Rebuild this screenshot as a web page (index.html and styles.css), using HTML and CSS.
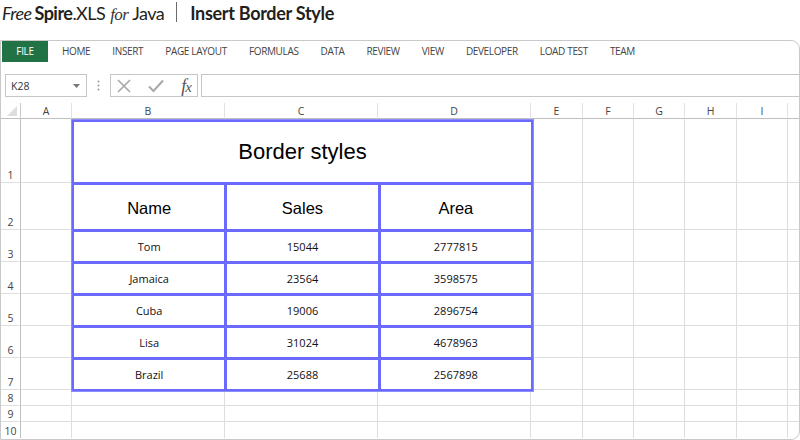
FILE: index.html
```html
<!DOCTYPE html>
<html>
<head>
<meta charset="utf-8">
<link rel="stylesheet" href="styles.css">
</head>
<body>
<header class="title">
  <div class="logo"><span class="l-free">Free</span><span class="l-spire">Spire</span><span class="l-xls">.XLS</span><span class="l-for">for</span><span class="l-java">Java</span></div>
  <span class="sep"></span>
  <h1 class="page-title">Insert Border Style</h1>
</header>
<div class="frame">
  <nav class="tabs">
    <span class="tab file">FILE</span>
    <span class="tab">HOME</span>
    <span class="tab">INSERT</span>
    <span class="tab">PAGE LAYOUT</span>
    <span class="tab">FORMULAS</span>
    <span class="tab">DATA</span>
    <span class="tab">REVIEW</span>
    <span class="tab">VIEW</span>
    <span class="tab">DEVELOPER</span>
    <span class="tab">LOAD TEST</span>
    <span class="tab">TEAM</span>
  </nav>
  <div class="fbar">
    <div class="namebox"><span>K28</span><svg class="dd" width="7" height="4" viewBox="0 0 7 4"><path d="M0 0H7L3.5 4Z" fill="#777"/></svg></div>
    <svg class="dots" width="3" height="11" viewBox="0 0 3 11"><circle cx="1.5" cy="1.5" r="1" fill="#9a9a9a"/><circle cx="1.5" cy="5.5" r="1" fill="#9a9a9a"/><circle cx="1.5" cy="9.5" r="1" fill="#9a9a9a"/></svg>
    <div class="fbtns">
      <svg width="14" height="14" viewBox="0 0 14 14"><path d="M1 1L13 13M13 1L1 13" stroke="#a8a8a8" stroke-width="1.6" fill="none"/></svg>
      <svg width="16" height="14" viewBox="0 0 16 14"><path d="M1 7.5L5.5 12L15 1.5" stroke="#a8a8a8" stroke-width="2" fill="none"/></svg>
      <span class="fx">f<i>x</i></span>
    </div>
    <div class="finput"></div>
  </div>
  <div class="sheet">
    <div class="tbl">
      <div class="t t-title">Border styles</div>
      <div class="t t-head">Name</div>
      <div class="t t-head">Sales</div>
      <div class="t t-head">Area</div>
      <div class="t">Tom</div><div class="t">15044</div><div class="t">2777815</div>
      <div class="t">Jamaica</div><div class="t">23564</div><div class="t">3598575</div>
      <div class="t">Cuba</div><div class="t">19006</div><div class="t">2896754</div>
      <div class="t">Lisa</div><div class="t">31024</div><div class="t">4678963</div>
      <div class="t">Brazil</div><div class="t">25688</div><div class="t">2567898</div>
    </div>

    <div class="corner"><span class="tri"></span></div>
    <div class="ch">A</div><div class="ch">B</div><div class="ch">C</div><div class="ch">D</div><div class="ch">E</div><div class="ch">F</div><div class="ch">G</div><div class="ch">H</div><div class="ch">I</div><div class="ch last"></div>

    <div class="rh">1</div><div class="c"></div><div class="c"></div><div class="c"></div><div class="c"></div><div class="c"></div><div class="c"></div><div class="c last"></div>
    <div class="rh">2</div><div class="c"></div><div class="c"></div><div class="c"></div><div class="c"></div><div class="c"></div><div class="c"></div><div class="c last"></div>
    <div class="rh">3</div><div class="c"></div><div class="c"></div><div class="c"></div><div class="c"></div><div class="c"></div><div class="c"></div><div class="c last"></div>
    <div class="rh">4</div><div class="c"></div><div class="c"></div><div class="c"></div><div class="c"></div><div class="c"></div><div class="c"></div><div class="c last"></div>
    <div class="rh">5</div><div class="c"></div><div class="c"></div><div class="c"></div><div class="c"></div><div class="c"></div><div class="c"></div><div class="c last"></div>
    <div class="rh">6</div><div class="c"></div><div class="c"></div><div class="c"></div><div class="c"></div><div class="c"></div><div class="c"></div><div class="c last"></div>
    <div class="rh">7</div><div class="c"></div><div class="c"></div><div class="c"></div><div class="c"></div><div class="c"></div><div class="c"></div><div class="c last"></div>
    <div class="rh">8</div><div class="c"></div><div class="c"></div><div class="c"></div><div class="c"></div><div class="c"></div><div class="c"></div><div class="c"></div><div class="c"></div><div class="c"></div><div class="c last"></div>
    <div class="rh">9</div><div class="c"></div><div class="c"></div><div class="c"></div><div class="c"></div><div class="c"></div><div class="c"></div><div class="c"></div><div class="c"></div><div class="c"></div><div class="c last"></div>
    <div class="rh rlast">10</div><div class="c"></div><div class="c"></div><div class="c"></div><div class="c"></div><div class="c"></div><div class="c"></div><div class="c"></div><div class="c"></div><div class="c"></div><div class="c last"></div>
  </div>
</div>
</body>
</html>
```
FILE: styles.css
```css
* { box-sizing: border-box; }
html, body { margin: 0; padding: 0; }
body {
  width: 800px;
  height: 440px;
  overflow: hidden;
  background: #fff;
  font-family: "Open Sans", "Noto Sans", sans-serif;
  color: #222;
}

/* ---------- title ---------- */
.title {
  height: 40px;
  display: flex;
  align-items: flex-start;
  padding: 1px 0 0 2px;
}
.logo {
  display: flex;
  align-items: baseline;
  font-family: Lato, sans-serif;
  font-size: 18px;
  line-height: 24px;
  color: #231f20;
  letter-spacing: -0.55px;
}
.l-free { font-style: italic; margin-right: 3px; }
.l-spire { font-weight: 700; }
.l-for {
  font-family: "Liberation Serif", serif;
  font-style: italic;
  font-size: 17px;
  color: #333;
  margin: 0 4px 0 5px;
}
.sep {
  width: 1px;
  height: 20px;
  background: #6b6b6b;
  margin: 1px 13px 0 12px;
}
.page-title {
  margin: 0;
  font-family: Lato, sans-serif;
  font-weight: 700;
  font-size: 18px;
  line-height: 24px;
  letter-spacing: -0.3px;
  color: #231f20;
}

/* ---------- frame ---------- */
.frame {
  height: 400px;
  border: 1px solid #c9c9c9;
  border-radius: 0 9px 9px 0;
  overflow: hidden;
}

.tabs {
  display: flex;
  align-items: center;
  height: 21px;
  padding-left: 1px;
}
.tab {
  font-family: "Open Sans", sans-serif;
  font-size: 10px;
  letter-spacing: -0.35px;
  color: #444;
  padding: 0 11px;
  line-height: 21px;
}
.tab.file {
  background: #217346;
  color: #fff;
  width: 46px;
  text-align: center;
  padding: 0;
  margin-right: 3px;
}

/* ---------- formula bar ---------- */
.fbar {
  display: flex;
  align-items: center;
  height: 23px;
  margin-top: 12px;
  padding-left: 4px;
}
.namebox {
  width: 82px;
  height: 23px;
  border: 1px solid #c6c6c6;
  display: flex;
  align-items: center;
  justify-content: space-between;
  padding: 0 6px 0 5px;
  font-size: 10.5px;
  color: #333;
}
.dots { margin: 0 10px 0 10px; }
.fbtns {
  width: 88px;
  height: 23px;
  border: 1px solid #c6c6c6;
  display: flex;
  align-items: center;
  justify-content: space-between;
  padding: 0 6px 0 6px;
}
.fx {
  font-family: "Liberation Serif", serif;
  font-style: italic;
  font-size: 18px;
  color: #555;
  letter-spacing: -1px;
  line-height: 1;
}
.fx i { font-size: 15px; }
.finput {
  flex: 1;
  height: 23px;
  border: 1px solid #c6c6c6;
  border-right: none;
  margin-left: 3px;
}

/* ---------- sheet ---------- */
.sheet {
  margin-top: 6px;
  display: grid;
  grid-template-columns: 20px 51px 153px 153px 153px 52px 51px 51px 52px 51px 1fr;
  grid-template-rows: 16px 64px 47px 32px 32px 32px 32px 32px 16px 16px 16px;
  font-family: "Open Sans", sans-serif;
}
.corner {
  border-right: 1px solid #c8c8c8;
  border-bottom: 1px solid #bfbfbf;
  position: relative;
}
.tri {
  position: absolute;
  right: 3px;
  bottom: 2px;
  width: 0;
  height: 0;
  border-left: 10px solid transparent;
  border-bottom: 10px solid #dedede;
}
.ch {
  border-right: 1px solid #e2e2e2;
  border-bottom: 1px solid #bfbfbf;
  font-size: 10.5px;
  color: #444;
  text-align: center;
  line-height: 16px;
}
.rh {
  border-right: 1px solid #bfbfbf;
  border-bottom: 1px solid #dedede;
  font-size: 10.5px;
  color: #444;
  display: flex;
  align-items: flex-end;
  justify-content: center;
  line-height: 14px;
}
.c {
  border-right: 1px solid #dedede;
  border-bottom: 1px solid #dedede;
}
.last { border-right: none; }
.rlast, .sheet > div:nth-last-child(-n+11) { border-bottom: none; }

.tbl {
  grid-column: 3 / 6;
  grid-row: 2 / 9;
  margin: 0 -3px -2px -1px;
  position: relative;
  z-index: 1;
  display: grid;
  grid-template-columns: 1fr 1fr 1fr;
  grid-template-rows: 60px 44px 29px 29px 29px 29px 29px;
  gap: 3px;
  padding: 3px;
  background: #6a6aff;
  box-shadow: inset 0 0 0 1px #8c8cff;
}
.t {
  background: #fff;
  display: flex;
  align-items: center;
  justify-content: center;
  font-size: 11px;
  color: #111;
}
.t-title {
  grid-column: 1 / 4;
  font-family: "Liberation Sans", Arial, sans-serif;
  font-size: 22px;
  color: #000;
}
.t-head {
  font-family: "Liberation Sans", Arial, sans-serif;
  font-size: 16.5px;
  color: #000;
  padding-top: 2px;
}
```
